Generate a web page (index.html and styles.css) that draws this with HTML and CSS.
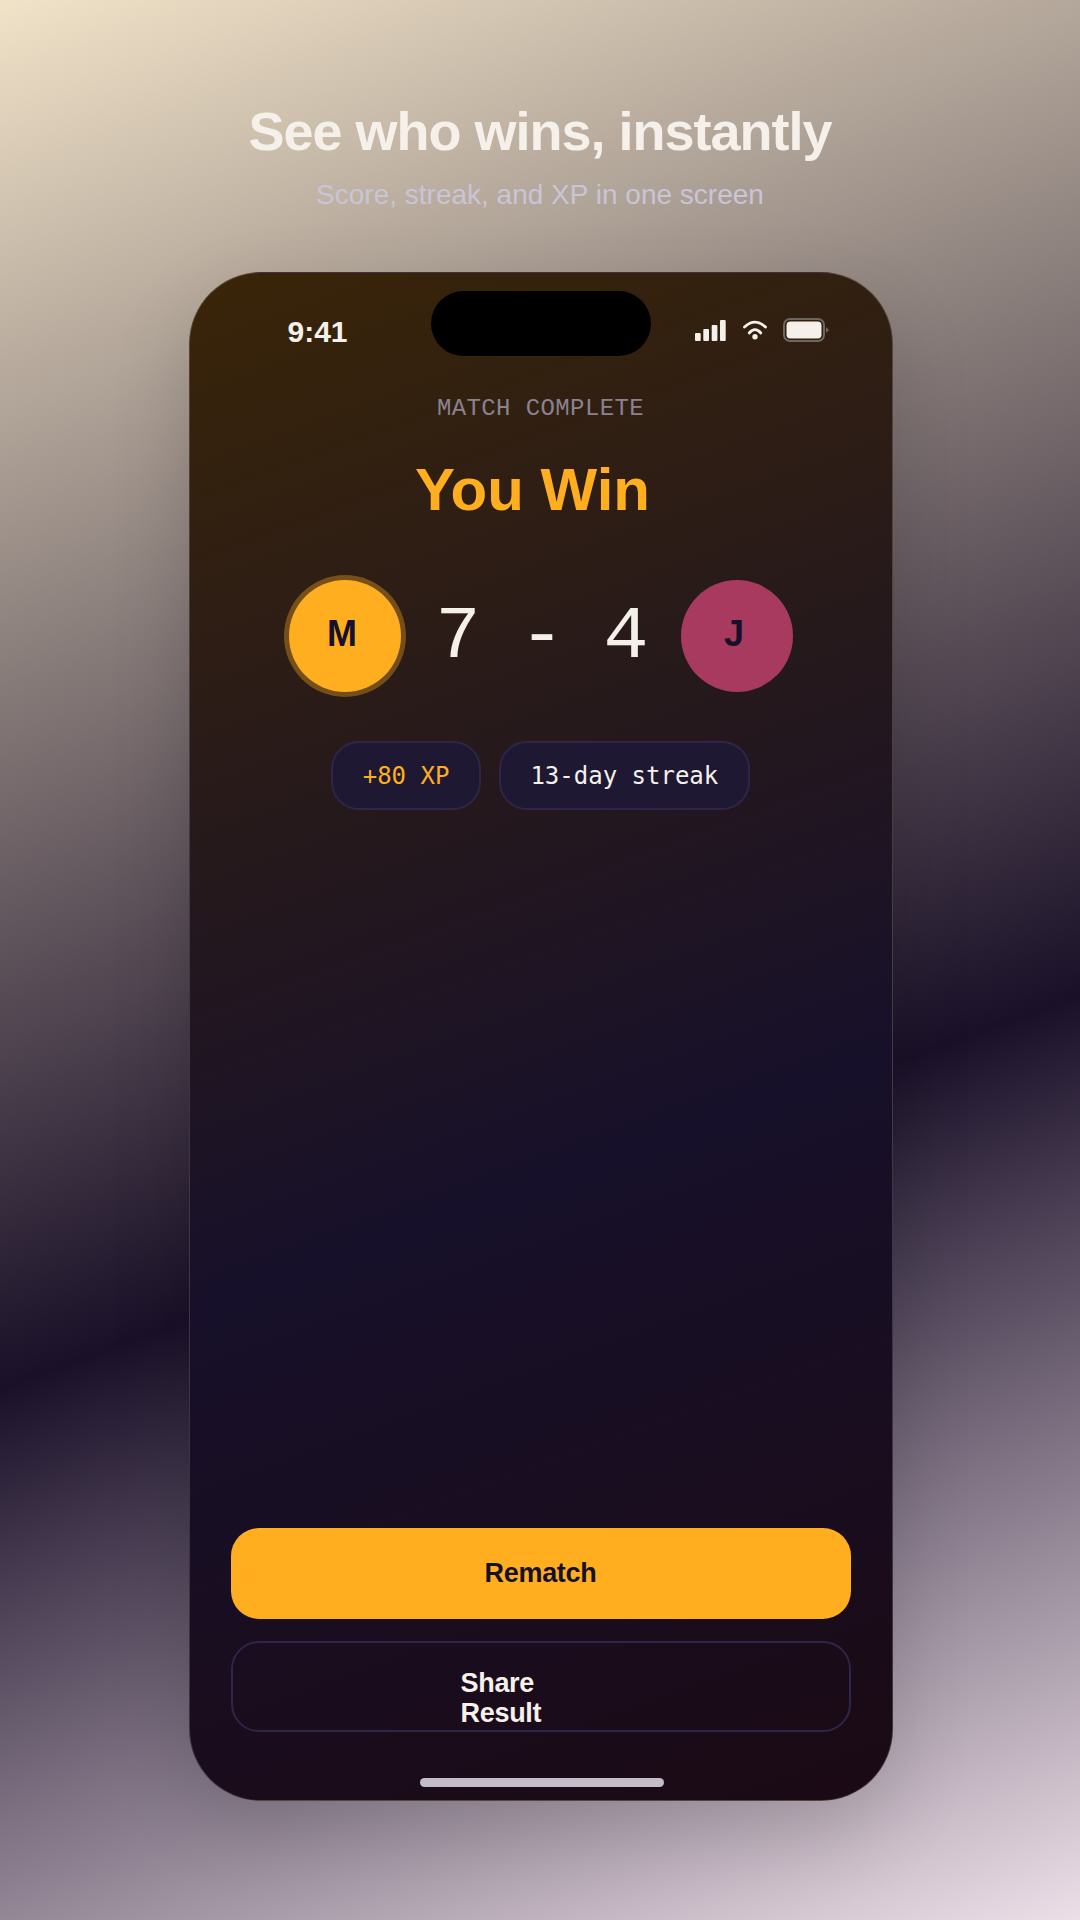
FILE: index.html
```html
<!DOCTYPE html>
<html lang="en">
<head>
    <meta charset="UTF-8">
    <meta name="viewport" content="width=device-width, initial-scale=1.0">
    <title>See who wins, instantly</title>
    <link rel="stylesheet" href="styles.css">
</head>
<body>
    <div class="caption">
        <h1>See who wins, instantly</h1>
        <p>Score, streak, and XP in one screen</p>
    </div>

    <div class="phone">
        <div class="island"></div>

        <div class="status-bar">
            <span class="time">9:41</span>
            <div class="status-icons">
                <svg class="signal" width="31" height="21" viewBox="0 0 31 21">
                    <rect x="0" y="13" width="5.700" height="8" rx="1" fill="#f5f1ea"/>
                    <rect x="8.300" y="9" width="5.700" height="12" rx="1" fill="#f5f1ea"/>
                    <rect x="16.700" y="5" width="5.700" height="16" rx="1" fill="#f5f1ea"/>
                    <rect x="25" y="0" width="5.700" height="21" rx="1" fill="#f5f1ea"/>
                </svg>
                <svg class="wifi" width="24" height="20" viewBox="0 0 24 20" fill="none" stroke="#f5f1ea" stroke-width="2.800" stroke-linecap="round">
                    <path d="M1.500 7Q12 -2.700 22.500 7"/>
                    <path d="M6.200 13Q12 6.400 17.800 13"/>
                    <circle cx="12" cy="16.800" r="2.700" fill="#f5f1ea" stroke="none"/>
                </svg>
                <svg class="battery" width="46" height="24" viewBox="0 0 46 24">
                    <rect x="1" y="1" width="40" height="22" rx="6" fill="none" stroke="#6f6660" stroke-width="2"/>
                    <rect x="3.500" y="3.500" width="35" height="17" rx="4" fill="#f5f1ea"/>
                    <path d="M43 9L46 12L43 15Z" fill="#6f6660"/>
                </svg>
            </div>
        </div>

        <div class="result">
            <div class="eyebrow">MATCH COMPLETE</div>
            <h2 class="title">You Win</h2>

            <div class="score-row">
                <div class="avatar avatar-win">M</div>
                <div class="score">7 - 4</div>
                <div class="avatar avatar-lose">J</div>
            </div>

            <div class="chips">
                <div class="chip chip-xp">+80 XP</div>
                <div class="chip">13-day streak</div>
            </div>
        </div>

        <div class="actions">
            <button class="btn btn-primary">Rematch</button>
            <button class="btn btn-secondary"><span class="btn-label">Share<br>Result</span></button>
        </div>

        <div class="home-bar"></div>
    </div>
</body>
</html>
```

FILE: styles.css
```css
* {
    box-sizing: border-box;
}

body {
    display: flex;
    flex-direction: column;
    align-items: center;
    width: 1080px;
    height: 1920px;
    margin: 0;
    overflow: hidden;
    font-family: "Liberation Sans", Arial, sans-serif;
    background: linear-gradient(160deg, #f1e3c8 0%, #1a1028 60%, #eddfe8 100%);
}

.caption {
    padding-top: 98px;
    height: 272px;
    text-align: center;
}

.caption h1 {
    margin: 0;
    font-size: 54px;
    line-height: 66px;
    font-weight: bold;
    letter-spacing: -1px;
    color: #f5f1ea;
}

.caption p {
    margin: 14px 0 0;
    font-size: 28px;
    line-height: 34px;
    color: #c9c5d6;
}

.phone {
    position: relative;
    display: flex;
    flex-direction: column;
    width: 704px;
    height: 1529px;
    margin-left: 1px;
    border: 1px solid rgba(255, 255, 255, 0.16);
    border-radius: 72px;
    background: linear-gradient(160deg, #3a2508 0%, #17102a 58%, #1b0a14 100%);
    box-shadow: 0 30px 80px rgba(0, 0, 0, 0.15);
    overflow: hidden;
}

.island {
    position: absolute;
    top: 18px;
    left: 241px;
    width: 220px;
    height: 65px;
    border-radius: 33px;
    background-color: #000;
}

.status-bar {
    display: flex;
    justify-content: space-between;
    align-items: center;
    height: 44px;
    margin-top: 36px;
    padding: 0 63px 0 98px;
}

.time {
    padding-top: 2px;
    font-size: 30px;
    font-weight: bold;
    color: #f5f1ea;
}

.status-icons {
    display: flex;
    align-items: center;
    gap: 16px;
    padding-bottom: 2px;
}

.signal {
    margin-right: 1px;
}

.result {
    display: flex;
    flex-direction: column;
    align-items: center;
}

.eyebrow {
    margin-top: 42px;
    font-family: "Liberation Mono", "DejaVu Sans Mono", monospace;
    font-size: 24px;
    line-height: 28px;
    letter-spacing: 0.400px;
    color: #8a8290;
}

.title {
    margin: 32px 16px 0 0;
    font-size: 60px;
    line-height: 70px;
    font-weight: bold;
    color: #ffae20;
}

.score-row {
    display: flex;
    align-items: center;
    gap: 35px;
    margin-top: 55px;
}

.avatar {
    display: flex;
    justify-content: center;
    align-items: center;
    width: 112px;
    height: 112px;
    padding: 0 5px 5px 0;
    border-radius: 50%;
    font-size: 36px;
    font-weight: bold;
    color: #17102a;
}

.avatar-win {
    background-color: #ffae20;
    box-shadow: 0 0 0 5px rgba(255, 174, 32, 0.35);
}

.avatar-lose {
    background-color: #a83a5f;
}

.score {
    width: 210px;
    padding-top: 4px;
    font-family: "Liberation Mono", "DejaVu Sans Mono", monospace;
    font-size: 75px;
    line-height: 84px;
    letter-spacing: -3px;
    white-space: pre;
    text-align: center;
    color: #f5f1ea;
}

.chips {
    display: flex;
    gap: 18px;
    margin-top: 49px;
}

.chip {
    display: flex;
    align-items: center;
    height: 69px;
    padding: 0 29.500px;
    border: 2px solid #2e2648;
    border-radius: 28px;
    background-color: #1e1833;
    font-family: "DejaVu Sans Mono", "Liberation Mono", monospace;
    font-size: 24px;
    color: #f5f1ea;
}

.chip-xp {
    color: #ffae20;
}

.actions {
    display: flex;
    flex-direction: column;
    gap: 22px;
    margin-top: auto;
    padding: 0 41px;
}

.btn {
    display: block;
    width: 100%;
    height: 91px;
    padding: 0;
    border-radius: 28px;
    font-family: "Liberation Sans", Arial, sans-serif;
    font-size: 27px;
    font-weight: bold;
    letter-spacing: -0.300px;
    cursor: pointer;
}

.btn-primary {
    border: none;
    background-color: #ffae20;
    color: #17102a;
}

.btn-secondary {
    border: 2px solid #2e2648;
    background-color: transparent;
    color: #f5f1ea;
}

.btn-label {
    display: block;
    width: 160px;
    margin: 22px auto 0;
    line-height: 30px;
    text-align: left;
}

.home-bar {
    width: 244px;
    height: 9px;
    margin: 46px 228px 13px 230px;
    border-radius: 5px;
    background-color: #c3bcc9;
}
```
